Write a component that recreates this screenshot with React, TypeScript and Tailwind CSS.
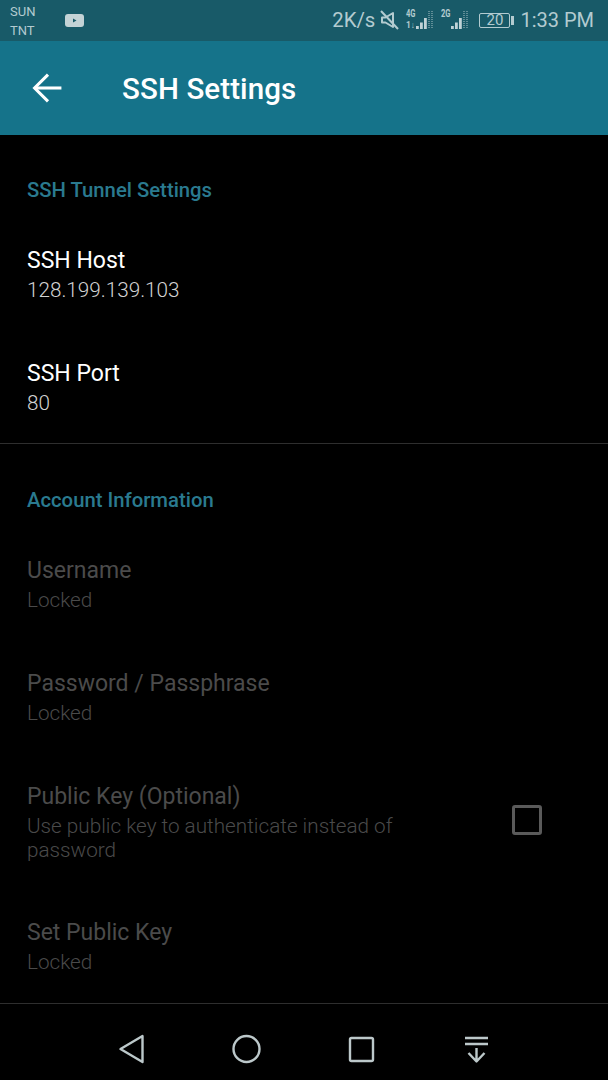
import { ArrowLeft } from "lucide-react";

// three solid bars, then two thin hatched columns for the empty slots
function SignalBars() {
  const bars = [3, 6.500, 11];
  return (
    <>
      {bars.map((h, i) => (
        <rect key={i} x={i * 4} y={19 - h} width="2.800" height={h} fill="#c0d3d7" />
      ))}
      <path d="M13 1v18M16 1v18" stroke="#7fa4ac" strokeWidth="1.400" strokeDasharray="1 1" />
    </>
  );
}

function StatusBar() {
  return (
    <div className="h-[41px] bg-[#185a68] flex items-center text-[#b3cbd0] pl-[10px] pr-[14px]">
      <div className="text-[13px] leading-[19px] w-[55px]">
        <div>SUN</div>
        <div>TNT</div>
      </div>
      {/* youtube icon */}
      <svg width="19" height="13" viewBox="0 0 19 13" className="mt-[-1px]">
        <rect width="19" height="13" rx="3" fill="#c3d3d6" />
        <path d="M8 4.500l3.500 2-3.500 2z" fill="#185a68" />
      </svg>
      <div className="ml-auto flex items-center">
        <span className="text-[20.4px] mr-[5px]">2K/s</span>
        {/* muted speaker */}
        <svg width="19" height="20" viewBox="0 0 19 20" fill="none" stroke="#b3cbd0" strokeWidth="2" strokeLinejoin="round" className="mr-[7px]">
          <path d="M2 7.500h3.500L13 3v14l-7.500-4.500H2z" />
          <path d="M1 1l17 18" />
        </svg>
        {/* 4G signal */}
        <svg width="29" height="20" viewBox="0 0 29 20" className="mr-[6px] mt-[-1px] overflow-visible">
          <text x="0" y="7" fontSize="10" fontWeight="700" fill="#b3cbd0" textLength="9.500" lengthAdjust="spacingAndGlyphs">4G</text>
          <text x="0" y="18" fontSize="9" fontWeight="700" fill="#b3cbd0" textLength="9" lengthAdjust="spacingAndGlyphs">1↓</text>
          <g transform="translate(10 0)">
            <SignalBars />
          </g>
        </svg>
        {/* 2G signal */}
        <svg width="29" height="20" viewBox="0 0 29 20" className="mr-[9px] mt-[-1px] overflow-visible">
          <text x="0" y="7" fontSize="10" fontWeight="700" fill="#b3cbd0" textLength="9.500" lengthAdjust="spacingAndGlyphs">2G</text>
          <g transform="translate(10 0)">
            <SignalBars />
          </g>
        </svg>
        {/* battery */}
        <div className="flex items-center mr-[6px]">
          <div className="w-[31px] h-[15px] border border-[#b3cbd0] rounded-[2px] text-[15px] leading-[13px] text-center">20</div>
          <div className="w-[3px] h-[9px] bg-[#b3cbd0] ml-[1px]" />
        </div>
        <span className="text-[20px]">1:33 PM</span>
      </div>
    </div>
  );
}

function Toolbar() {
  return (
    <div className="h-[94px] bg-[#15738a] flex items-center text-white pl-[25px]">
      <ArrowLeft size={46} strokeWidth={1.6} strokeLinecap="butt" strokeLinejoin="miter" />
      <h1 className="ml-[51px] mt-[3px] text-[29.500px] font-medium tracking-[0.1px]">SSH Settings</h1>
    </div>
  );
}

function SectionTitle({ children }: { children: string }) {
  return <div className="h-[28px] mb-[21px] px-[27px] text-[20.3px] leading-[28px] font-medium text-[#2a7a8f]">{children}</div>;
}

function Pref({ title, sub, dim, height = "h-[113px]" }: { title: string; sub: string; dim?: boolean; height?: string }) {
  return (
    <div className={`${height} px-[27px] pt-[21px]`}>
      <div className={`text-[23px] leading-[30px] ${dim ? "text-[#4b4b4b]" : "text-white"}`}>{title}</div>
      <div className={`text-[20.7px] leading-[28px] font-light ${dim ? "text-[#4a4a4a]" : "text-[#d2d2d2]"}`}>{sub}</div>
    </div>
  );
}

function NavBar() {
  return (
    <div className="flex-1">
      <svg width="608" height="76" viewBox="0 0 608 76" fill="none" stroke="#bcc8ca" strokeWidth="2.400" strokeLinejoin="round">
        <path d="M120.500 45L142.500 32v26z" />
        <circle cx="246.500" cy="45" r="13" />
        <rect x="350" y="34" width="23" height="23" rx="1.500" />
        <path d="M465 34h23M465 40h23M476.500 44v13M468.500 49l8 8.500 8-8.500" />
      </svg>
    </div>
  );
}

export default function App() {
  return (
    <div className="w-[608px] h-[1080px] bg-black flex flex-col overflow-hidden font-['Roboto',sans-serif]">
      <StatusBar />
      <Toolbar />
      {/* settings list */}
      <div className="pt-[41px]">
        <SectionTitle>SSH Tunnel Settings</SectionTitle>
        <Pref title="SSH Host" sub="128.199.139.103" />
        <Pref title="SSH Port" sub="80" height="h-[105px]" />
      </div>
      <div className="h-px bg-[#2e2e2e]" />
      <div className="pt-[42px]">
        <SectionTitle>Account Information</SectionTitle>
        <Pref title="Username" sub="Locked" dim />
        <Pref title="Password / Passphrase" sub="Locked" dim />
        <div className="h-[136px] px-[27px] pt-[21px] flex">
          <div className="w-[400px]">
            <div className="text-[23px] leading-[30px] text-[#4b4b4b]">Public Key (Optional)</div>
            <div className="text-[20.7px] leading-[24px] mt-[2px] font-light text-[#4a4a4a]">Use public key to authenticate instead of password</div>
          </div>
          <div className="ml-[85px] mt-[23px] w-[30px] h-[30px] border-[3px] border-[#5a5a5a] rounded-[3px]" />
        </div>
        <Pref title="Set Public Key" sub="Locked" dim height="h-[106px]" />
      </div>
      <div className="h-px bg-[#2e2e2e]" />
      <NavBar />
    </div>
  );
}
